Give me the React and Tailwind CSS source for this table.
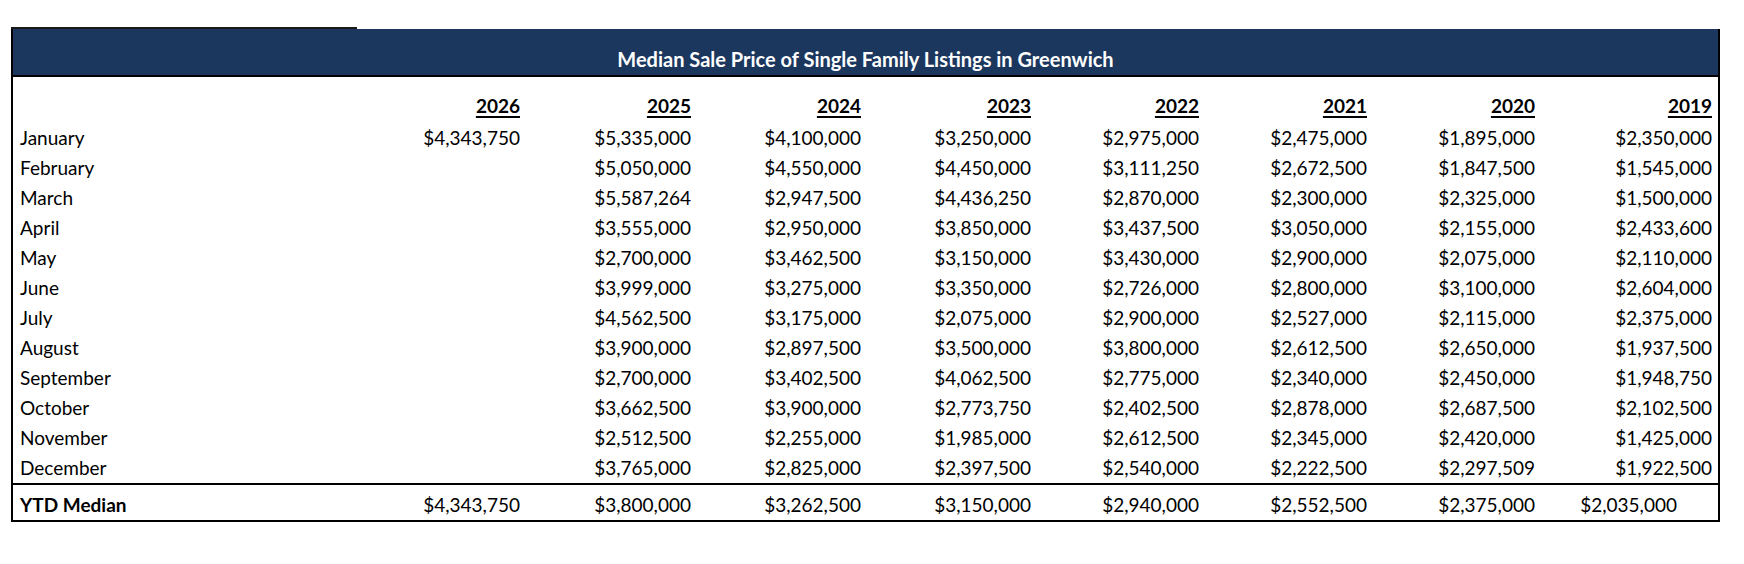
import React from 'react';

// Median sale price table, laid out like the spreadsheet export
const years = ['2026', '2025', '2024', '2023', '2022', '2021', '2020', '2019'];

const rows = [
  ['January', ['$4,343,750', '$5,335,000', '$4,100,000', '$3,250,000', '$2,975,000', '$2,475,000', '$1,895,000', '$2,350,000']],
  ['February', ['', '$5,050,000', '$4,550,000', '$4,450,000', '$3,111,250', '$2,672,500', '$1,847,500', '$1,545,000']],
  ['March', ['', '$5,587,264', '$2,947,500', '$4,436,250', '$2,870,000', '$2,300,000', '$2,325,000', '$1,500,000']],
  ['April', ['', '$3,555,000', '$2,950,000', '$3,850,000', '$3,437,500', '$3,050,000', '$2,155,000', '$2,433,600']],
  ['May', ['', '$2,700,000', '$3,462,500', '$3,150,000', '$3,430,000', '$2,900,000', '$2,075,000', '$2,110,000']],
  ['June', ['', '$3,999,000', '$3,275,000', '$3,350,000', '$2,726,000', '$2,800,000', '$3,100,000', '$2,604,000']],
  ['July', ['', '$4,562,500', '$3,175,000', '$2,075,000', '$2,900,000', '$2,527,000', '$2,115,000', '$2,375,000']],
  ['August', ['', '$3,900,000', '$2,897,500', '$3,500,000', '$3,800,000', '$2,612,500', '$2,650,000', '$1,937,500']],
  ['September', ['', '$2,700,000', '$3,402,500', '$4,062,500', '$2,775,000', '$2,340,000', '$2,450,000', '$1,948,750']],
  ['October', ['', '$3,662,500', '$3,900,000', '$2,773,750', '$2,402,500', '$2,878,000', '$2,687,500', '$2,102,500']],
  ['November', ['', '$2,512,500', '$2,255,000', '$1,985,000', '$2,612,500', '$2,345,000', '$2,420,000', '$1,425,000']],
  ['December', ['', '$3,765,000', '$2,825,000', '$2,397,500', '$2,540,000', '$2,222,500', '$2,297,509', '$1,922,500']],
];

const ytd = ['$4,343,750', '$3,800,000', '$3,262,500', '$3,150,000', '$2,940,000', '$2,552,500', '$2,375,000', '$2,035,000'];

const cols = 'grid grid-cols-[337px_170px_171px_170px_170px_168px_168px_168px_177px]';

export default function App() {
  return (
    <div className="w-[1744px] min-h-[564px] bg-white pt-[27px] pl-[11px] text-black font-['Lato','Liberation_Sans',sans-serif]">
      <div className="w-[1709px]">
        <div className="h-[2px] w-[346px] bg-[#1a1a1a]" />
        <div className="border-x-2 border-b-2 border-black">
          <div className="h-[48px] bg-[#1c375e] border-b-2 border-black flex items-end justify-center pb-[4px]">
            <span className="text-white font-bold text-[20px] leading-[24px]">
              Median Sale Price of Single Family Listings in Greenwich
            </span>
          </div>

          <div className={`${cols} h-[46px] items-end pb-[2px] text-[19px] leading-[30px]`}>
            <div />
            {years.map((y) => (
              <div key={y} className="text-right font-bold">
                <span className="underline decoration-[1.5px] underline-offset-[3px]">{y}</span>
              </div>
            ))}
          </div>

          {rows.map(([month, values]) => (
            <div key={month} className={`${cols} h-[30px] text-[19px] leading-[30px]`}>
              <div className="pl-[7px]">{month}</div>
              {values.map((v, i) => (
                <div key={i} className="text-right">{v}</div>
              ))}
            </div>
          ))}

          <div className={`${cols} h-[37px] border-t-2 border-black pt-[5px] text-[19px] leading-[30px]`}>
            <div className="pl-[7px] font-bold">YTD Median</div>
            {ytd.map((v, i) => (
              <div key={i} className={i === 7 ? 'text-right pr-[35px]' : 'text-right'}>{v}</div>
            ))}
          </div>
        </div>
      </div>
    </div>
  );
}
